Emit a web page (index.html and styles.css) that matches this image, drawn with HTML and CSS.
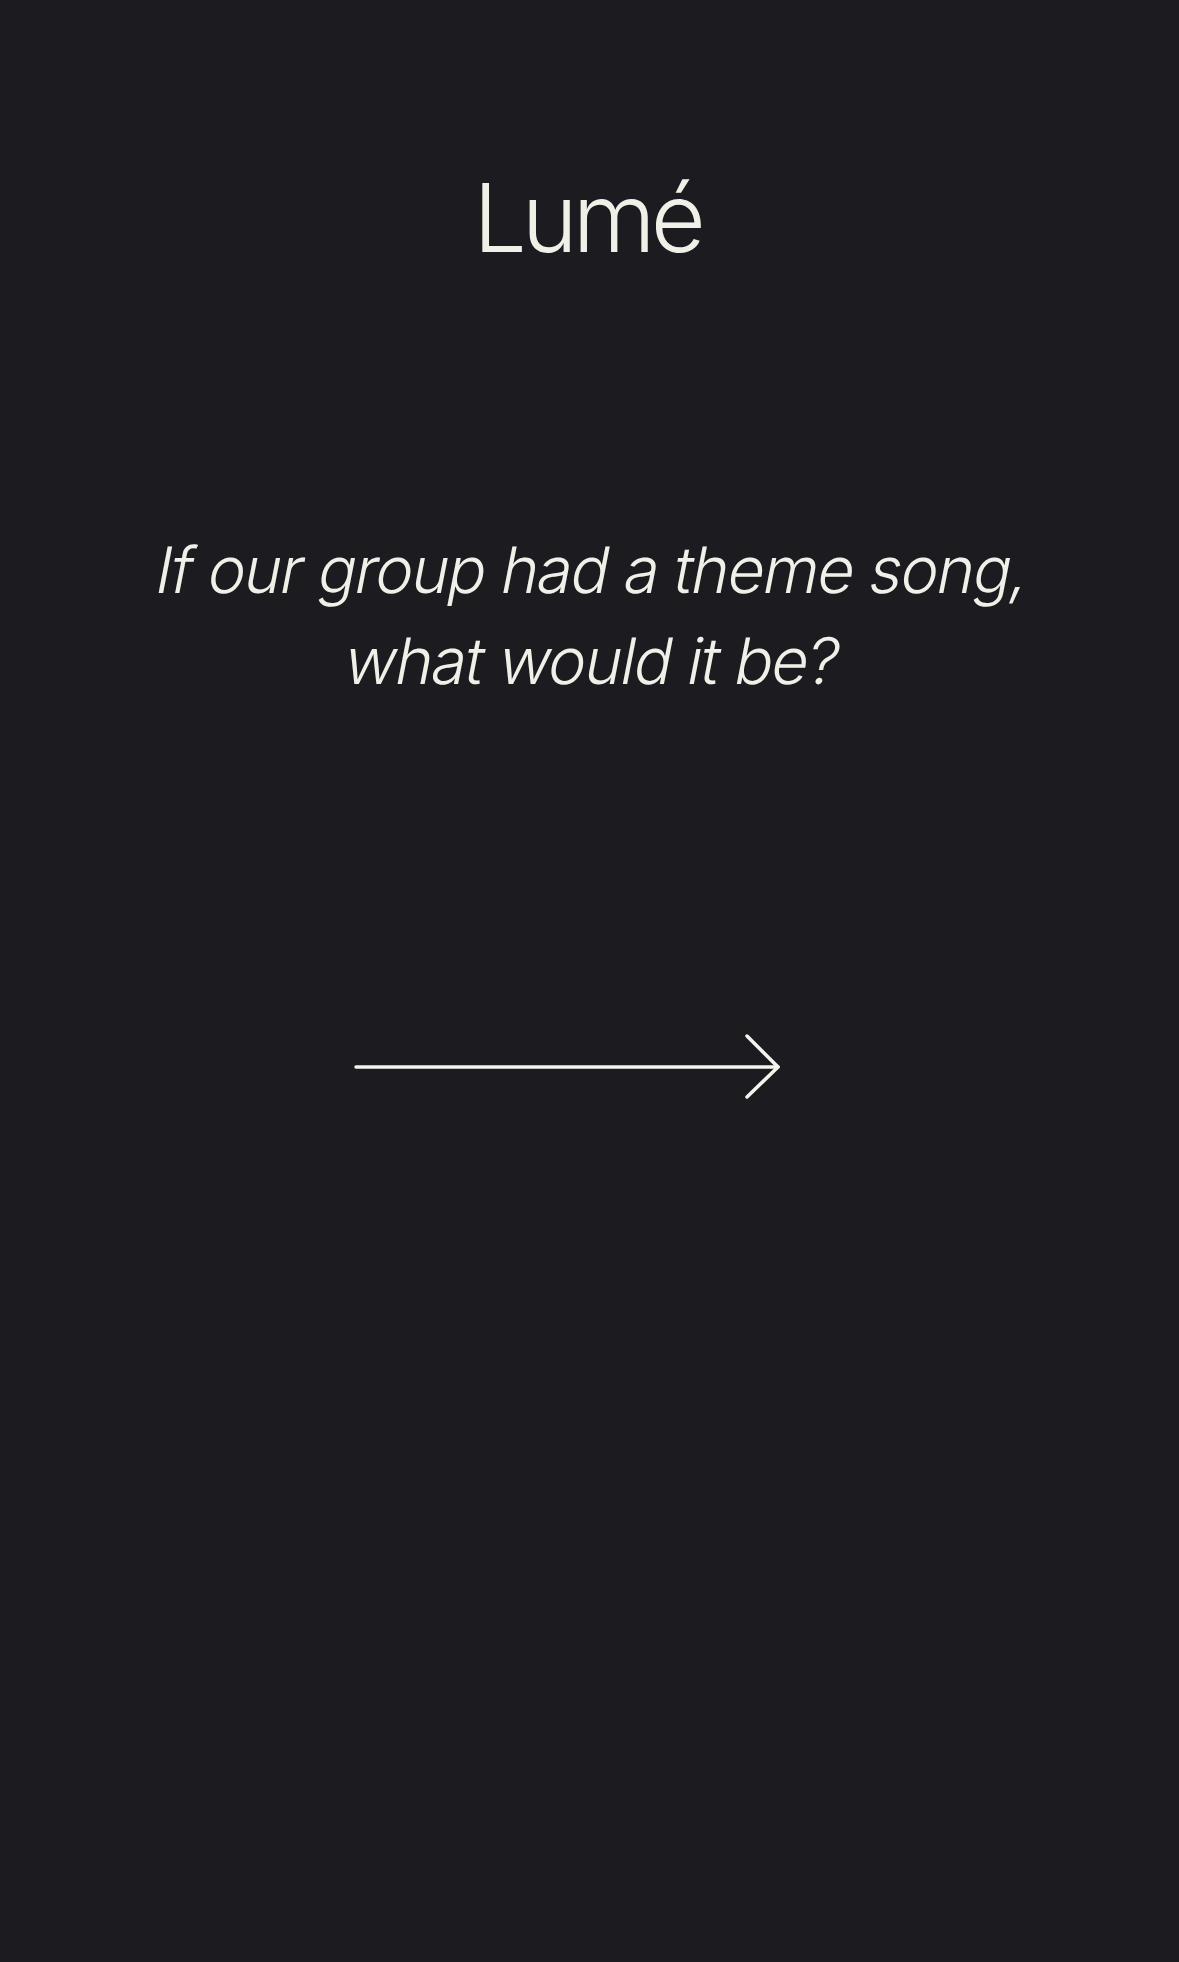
FILE: index.html
```html
<!DOCTYPE html>
<html lang="en">
<head>
<meta charset="utf-8">
<title>Lumé</title>
<link rel="stylesheet" href="styles.css">
</head>
<body>
<main class="screen">
  <h1 class="brand">Lumé</h1>
  <p class="question"><span class="line">If our group had a theme song,</span><span class="line">what would it be?</span></p>
  <div class="next">
    <svg class="arrow" width="430" height="70" viewBox="0 0 430 70" fill="none" stroke="#f5f4ee" stroke-width="3.5" stroke-linecap="round" stroke-linejoin="round">
      <line x1="4" y1="35" x2="426" y2="35"/>
      <polyline points="395,4 426,35 395,65"/>
    </svg>
  </div>
</main>
</body>
</html>
```

FILE: styles.css
```css
html, body {
  margin: 0;
  padding: 0;
  background: #1c1b1f;
}
body {
  font-family: Inter, "Noto Sans", sans-serif;
  color: #f1f0e8;
}
.screen {
  width: 1179px;
  height: 1962px;
  display: flex;
  flex-direction: column;
  align-items: center;
  box-sizing: border-box;
  padding-top: 170px;
}
.brand {
  margin: 0;
  font-size: 95px;
  font-weight: 300;
  line-height: 96px;
  letter-spacing: -5px;
  padding-right: 5px;
}
.question {
  margin: 258px 0 0;
  font-size: 64px;
  font-weight: 300;
  font-style: normal;
  line-height: 91px;
  letter-spacing: -1.6px;
  text-align: center;
  display: flex;
  flex-direction: column;
  align-items: center;
}
.line {
  display: block;
  transform: skewX(-11deg);
  transform-origin: 50% 68%;
}
.next {
  margin-top: 326px;
  display: flex;
  justify-content: center;
  width: 100%;
}
.arrow {
  display: block;
  margin-right: 45px;
}
```
